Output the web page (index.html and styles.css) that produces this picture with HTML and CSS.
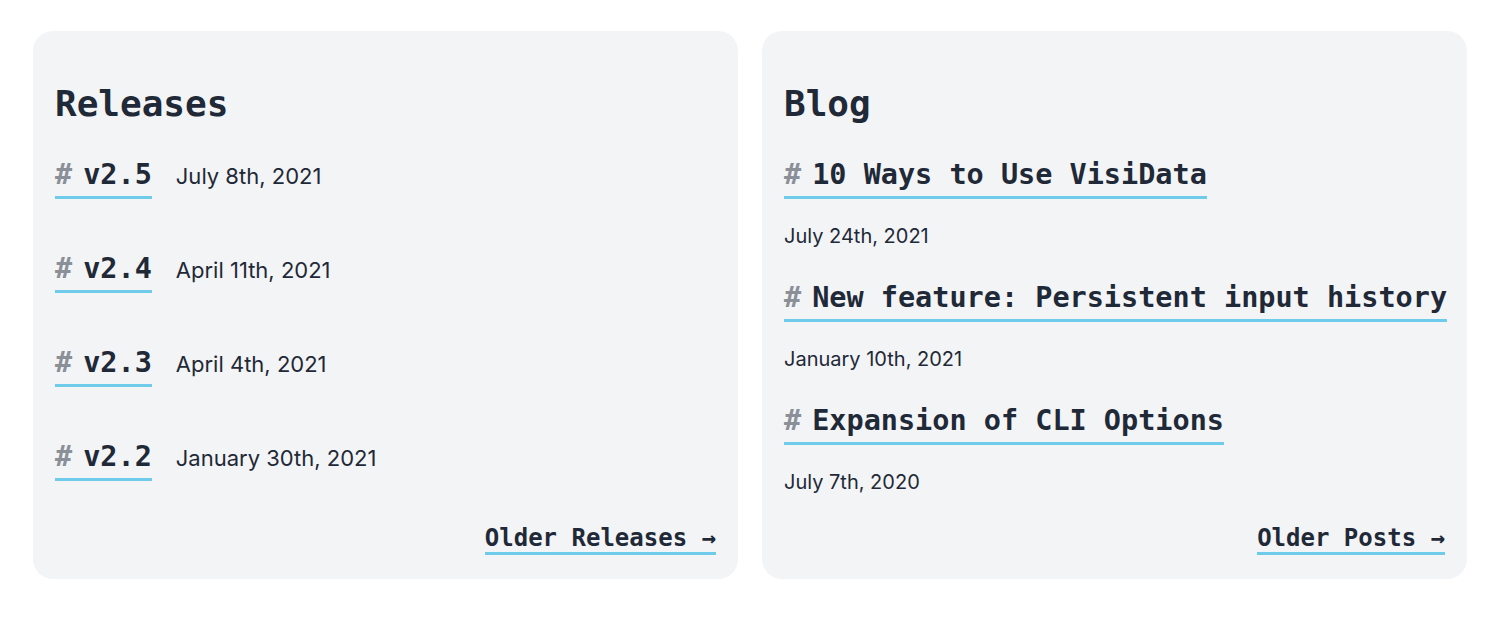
FILE: index.html
```html
<!DOCTYPE html>
<html>
<head>
<meta charset="utf-8">
<link rel="stylesheet" href="styles.css">
</head>
<body>
<div class="page">
  <section class="card">
    <h2 class="card-title">Releases</h2>
    <ul class="releases">
      <li class="release"><a class="hlink" href="#"><span class="hash">#</span>v2.5</a><span class="rdate">July 8th, 2021</span></li>
      <li class="release"><a class="hlink" href="#"><span class="hash">#</span>v2.4</a><span class="rdate">April 11th, 2021</span></li>
      <li class="release"><a class="hlink" href="#"><span class="hash">#</span>v2.3</a><span class="rdate">April 4th, 2021</span></li>
      <li class="release"><a class="hlink" href="#"><span class="hash">#</span>v2.2</a><span class="rdate">January 30th, 2021</span></li>
    </ul>
    <div class="more"><a class="more-link" href="#">Older Releases →</a></div>
  </section>
  <section class="card">
    <h2 class="card-title">Blog</h2>
    <ul class="posts">
      <li class="post"><a class="hlink" href="#"><span class="hash">#</span>10 Ways to Use VisiData</a><div class="pdate">July 24th, 2021</div></li>
      <li class="post"><a class="hlink" href="#"><span class="hash">#</span>New feature: Persistent input history</a><div class="pdate">January 10th, 2021</div></li>
      <li class="post"><a class="hlink" href="#"><span class="hash">#</span>Expansion of CLI Options</a><div class="pdate">July 7th, 2020</div></li>
    </ul>
    <div class="more"><a class="more-link" href="#">Older Posts →</a></div>
  </section>
</div>
</body>
</html>
```
FILE: styles.css
```css
html, body {
  margin: 0;
  padding: 0;
  background: #ffffff;
}
body {
  font-family: Inter, "Noto Sans", sans-serif;
  color: #1f2937;
}
.page {
  display: grid;
  grid-template-columns: minmax(0, 1fr) minmax(0, 1fr);
  gap: 24px;
  padding: 31px 33px 39px;
  height: 548px;
}
.card {
  background: #f3f4f6;
  border-radius: 20px;
  padding: 0 22px 24px;
  display: flex;
  flex-direction: column;
}
.card-title {
  font-family: "DejaVu Sans Mono", "Liberation Mono", monospace;
  font-weight: bold;
  font-size: 36px;
  line-height: 44px;
  margin: 51px 0 0;
}
.releases, .posts {
  list-style: none;
  margin: 0;
  padding: 0;
}
.release {
  display: flex;
  align-items: baseline;
  gap: 24px;
  margin-top: 31px;
  height: 76px;
}
.release + .release {
  margin-top: 18px;
}
.hlink {
  font-family: "DejaVu Sans Mono", "Liberation Mono", monospace;
  font-weight: bold;
  font-size: 28.5px;
  line-height: 36px;
  padding-bottom: 3px;
  color: #1f2937;
  text-decoration: none;
  border-bottom: 3px solid #6ecbea;
  display: inline-block;
  white-space: nowrap;
}
.hash {
  color: #8a8f98;
  margin-right: 11px;
}
.rdate {
  font-size: 22px;
}
.post {
  margin-top: 31px;
}
.post + .post {
  margin-top: 32px;
}
.pdate {
  font-size: 20px;
  margin-top: 25px;
}
.more {
  margin-top: auto;
  display: flex;
  justify-content: flex-end;
}
.more-link {
  font-family: "DejaVu Sans Mono", "Liberation Mono", monospace;
  font-weight: bold;
  font-size: 24px;
  line-height: 28px;
  color: #1f2937;
  text-decoration: none;
  border-bottom: 3px solid #6ecbea;
}
```
